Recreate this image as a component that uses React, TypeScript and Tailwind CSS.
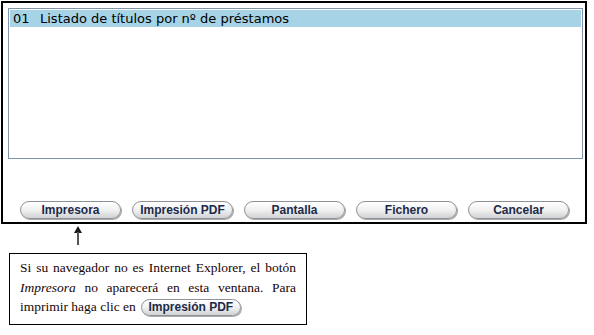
const buttons = ['Impresora', 'Impresión PDF', 'Pantalla', 'Fichero', 'Cancelar'];

const PillButton = ({ label, className = '' }: { label: string; className?: string }) => (
  <button
    className={`flex items-center justify-center rounded-full border border-[#8e9296] bg-gradient-to-b from-white via-[#f1f1f1] to-[#d0d2d4] shadow-[1px_1px_0_#a9abad] font-['Liberation_Sans',Arial,sans-serif] font-bold text-[12px] leading-none text-[#1c2a48] ${className}`}
  >
    {label}
  </button>
);

export default function App() {
  return (
    <div className="w-[594px] h-[335px] bg-white relative">
      <div className="ml-px mt-px w-[586px] h-[223px] border-2 border-black flex flex-col pl-[5px] pt-[5px]">
        <div className="w-[575px] h-[151px] border border-[#7f96aa] p-px">
          <div className="h-[17px] bg-[#a6d3e6] flex items-center pl-[3px] font-['DejaVu_Sans',Verdana,sans-serif] text-[13px] text-black">
            <span className="w-[27px]">01</span>
            <span>Listado de títulos por nº de préstamos</span>
          </div>
        </div>
        <div className="flex gap-[11px] pl-[12px] mt-[42px]">
          {buttons.map((b) => (
            <PillButton key={b} label={b} className="w-[101px] h-[18px]" />
          ))}
        </div>
      </div>

      <div className="ml-[73px] mt-[1px] w-[10px] h-[20px]">
        <svg width="10" height="20" viewBox="0 0 10 20">
          <path d="M5 1 L9 8 L1 8 Z" fill="#1a1a1a" />
          <rect x="4" y="7" width="2" height="13" fill="#555" />
        </svg>
      </div>

      <div className="ml-[9px] mt-[8px] w-[298px] h-[72px] border border-black px-[10px] pt-[4px] font-['Liberation_Serif','Times_New_Roman',serif] text-[13.5px] text-[#1a0505]">
        <div className="h-[20px] leading-[20px] text-justify [text-align-last:justify] whitespace-nowrap">
          Si su navegador no es Internet Explorer, el botón
        </div>
        <div className="h-[20px] leading-[20px] text-justify [text-align-last:justify]">
          <i>Impresora</i> no aparecerá en esta ventana. Para
        </div>
        <div className="-mt-[1px] flex items-center gap-[5px] leading-[20px]">
          <span>imprimir haga clic en</span>
          <PillButton label="Impresión PDF" className="w-[100px] h-[17px]" />
        </div>
      </div>
    </div>
  );
}
